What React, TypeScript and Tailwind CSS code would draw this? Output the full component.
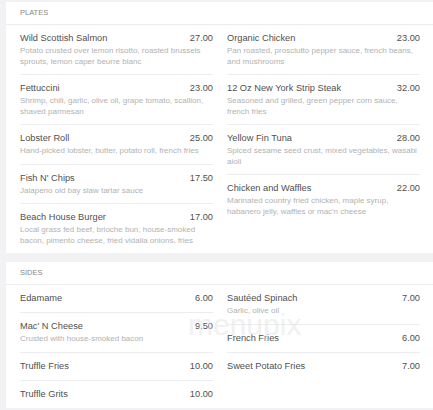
type Item = { name: string; price: string; desc?: string };

const plates: Item[][] = [
  [
    { name: "Wild Scottish Salmon", price: "27.00", desc: "Potato crusted over lemon risotto, roasted brussels sprouts, lemon caper beurre blanc" },
    { name: "Fettuccini", price: "23.00", desc: "Shrimp, chili, garlic, olive oil, grape tomato, scallion, shaved parmesan" },
    { name: "Lobster Roll", price: "25.00", desc: "Hand-picked lobster, butter, potato roll, french fries" },
    { name: "Fish N' Chips", price: "17.50", desc: "Jalapeno old bay slaw tartar sauce" },
    { name: "Beach House Burger", price: "17.00", desc: "Local grass fed beef, brioche bun, house-smoked bacon, pimento cheese, fried vidalia onions, fries" },
  ],
  [
    { name: "Organic Chicken", price: "23.00", desc: "Pan roasted, prosciutto pepper sauce, french beans, and mushrooms" },
    { name: "12 Oz New York Strip Steak", price: "32.00", desc: "Seasoned and grilled, green pepper corn sauce, french fries" },
    { name: "Yellow Fin Tuna", price: "28.00", desc: "Spiced sesame seed crust, mixed vegetables, wasabi aioli" },
    { name: "Chicken and Waffles", price: "22.00", desc: "Marinated country fried chicken, maple syrup, habanero jelly, waffles or mac'n cheese" },
  ],
];

const sides: Item[][] = [
  [
    { name: "Edamame", price: "6.00" },
    { name: "Mac' N Cheese", price: "9.50", desc: "Crusted with house-smoked bacon" },
    { name: "Truffle Fries", price: "10.00" },
    { name: "Truffle Grits", price: "10.00" },
  ],
  [
    { name: "Sautéed Spinach", price: "7.00", desc: "Garlic, olive oil" },
    { name: "French Fries", price: "6.00" },
    { name: "Sweet Potato Fries", price: "7.00" },
  ],
];

function MenuColumn({ items }: { items: Item[] }) {
  return (
    <div className="flex flex-col">
      {items.map((item, i) => (
        <div
          key={item.name}
          className={`pt-[6px] pb-[7px] ${i < items.length - 1 ? "border-b border-[#ededf0]" : ""}`}
        >
          <div className="flex justify-between text-[9.25px] leading-[14px] text-[#505050]">
            <span>{item.name}</span>
            <span>{item.price}</span>
          </div>
          {item.desc && (
            <p className="mt-[1px] pr-[2px] text-[8px] leading-[10.5px] text-[#b2b2b2]">{item.desc}</p>
          )}
        </div>
      ))}
    </div>
  );
}

function Section({ title, cols }: { title: string; cols: Item[][] }) {
  return (
    <section className="ml-[6px] bg-white">
      <div className="border-b border-[#ededf0] pl-[14px] py-[6px] text-[7.5px] leading-[10px] text-[#888]">
        {title}
      </div>
      <div className="grid grid-cols-[193px_193px] gap-x-[14px] pl-[14px]">
        {cols.map((col, i) => (
          <MenuColumn key={i} items={col} />
        ))}
      </div>
    </section>
  );
}

export default function App() {
  return (
    <div
      className="relative h-[410px] w-[433px] overflow-hidden bg-[#f2f2f5] pt-[2px]"
      style={{ fontFamily: '"Liberation Sans", Arial, sans-serif' }}
    >
      <div className="flex flex-col gap-[9px]">
        <Section title="PLATES" cols={plates} />
        <Section title="SIDES" cols={sides} />
      </div>

      {/* watermark */}
      <div className="pointer-events-none absolute left-[188px] top-[310px] text-[30px] leading-[30px] text-[#e4e4e4] opacity-50">
        menupix
      </div>
    </div>
  );
}
